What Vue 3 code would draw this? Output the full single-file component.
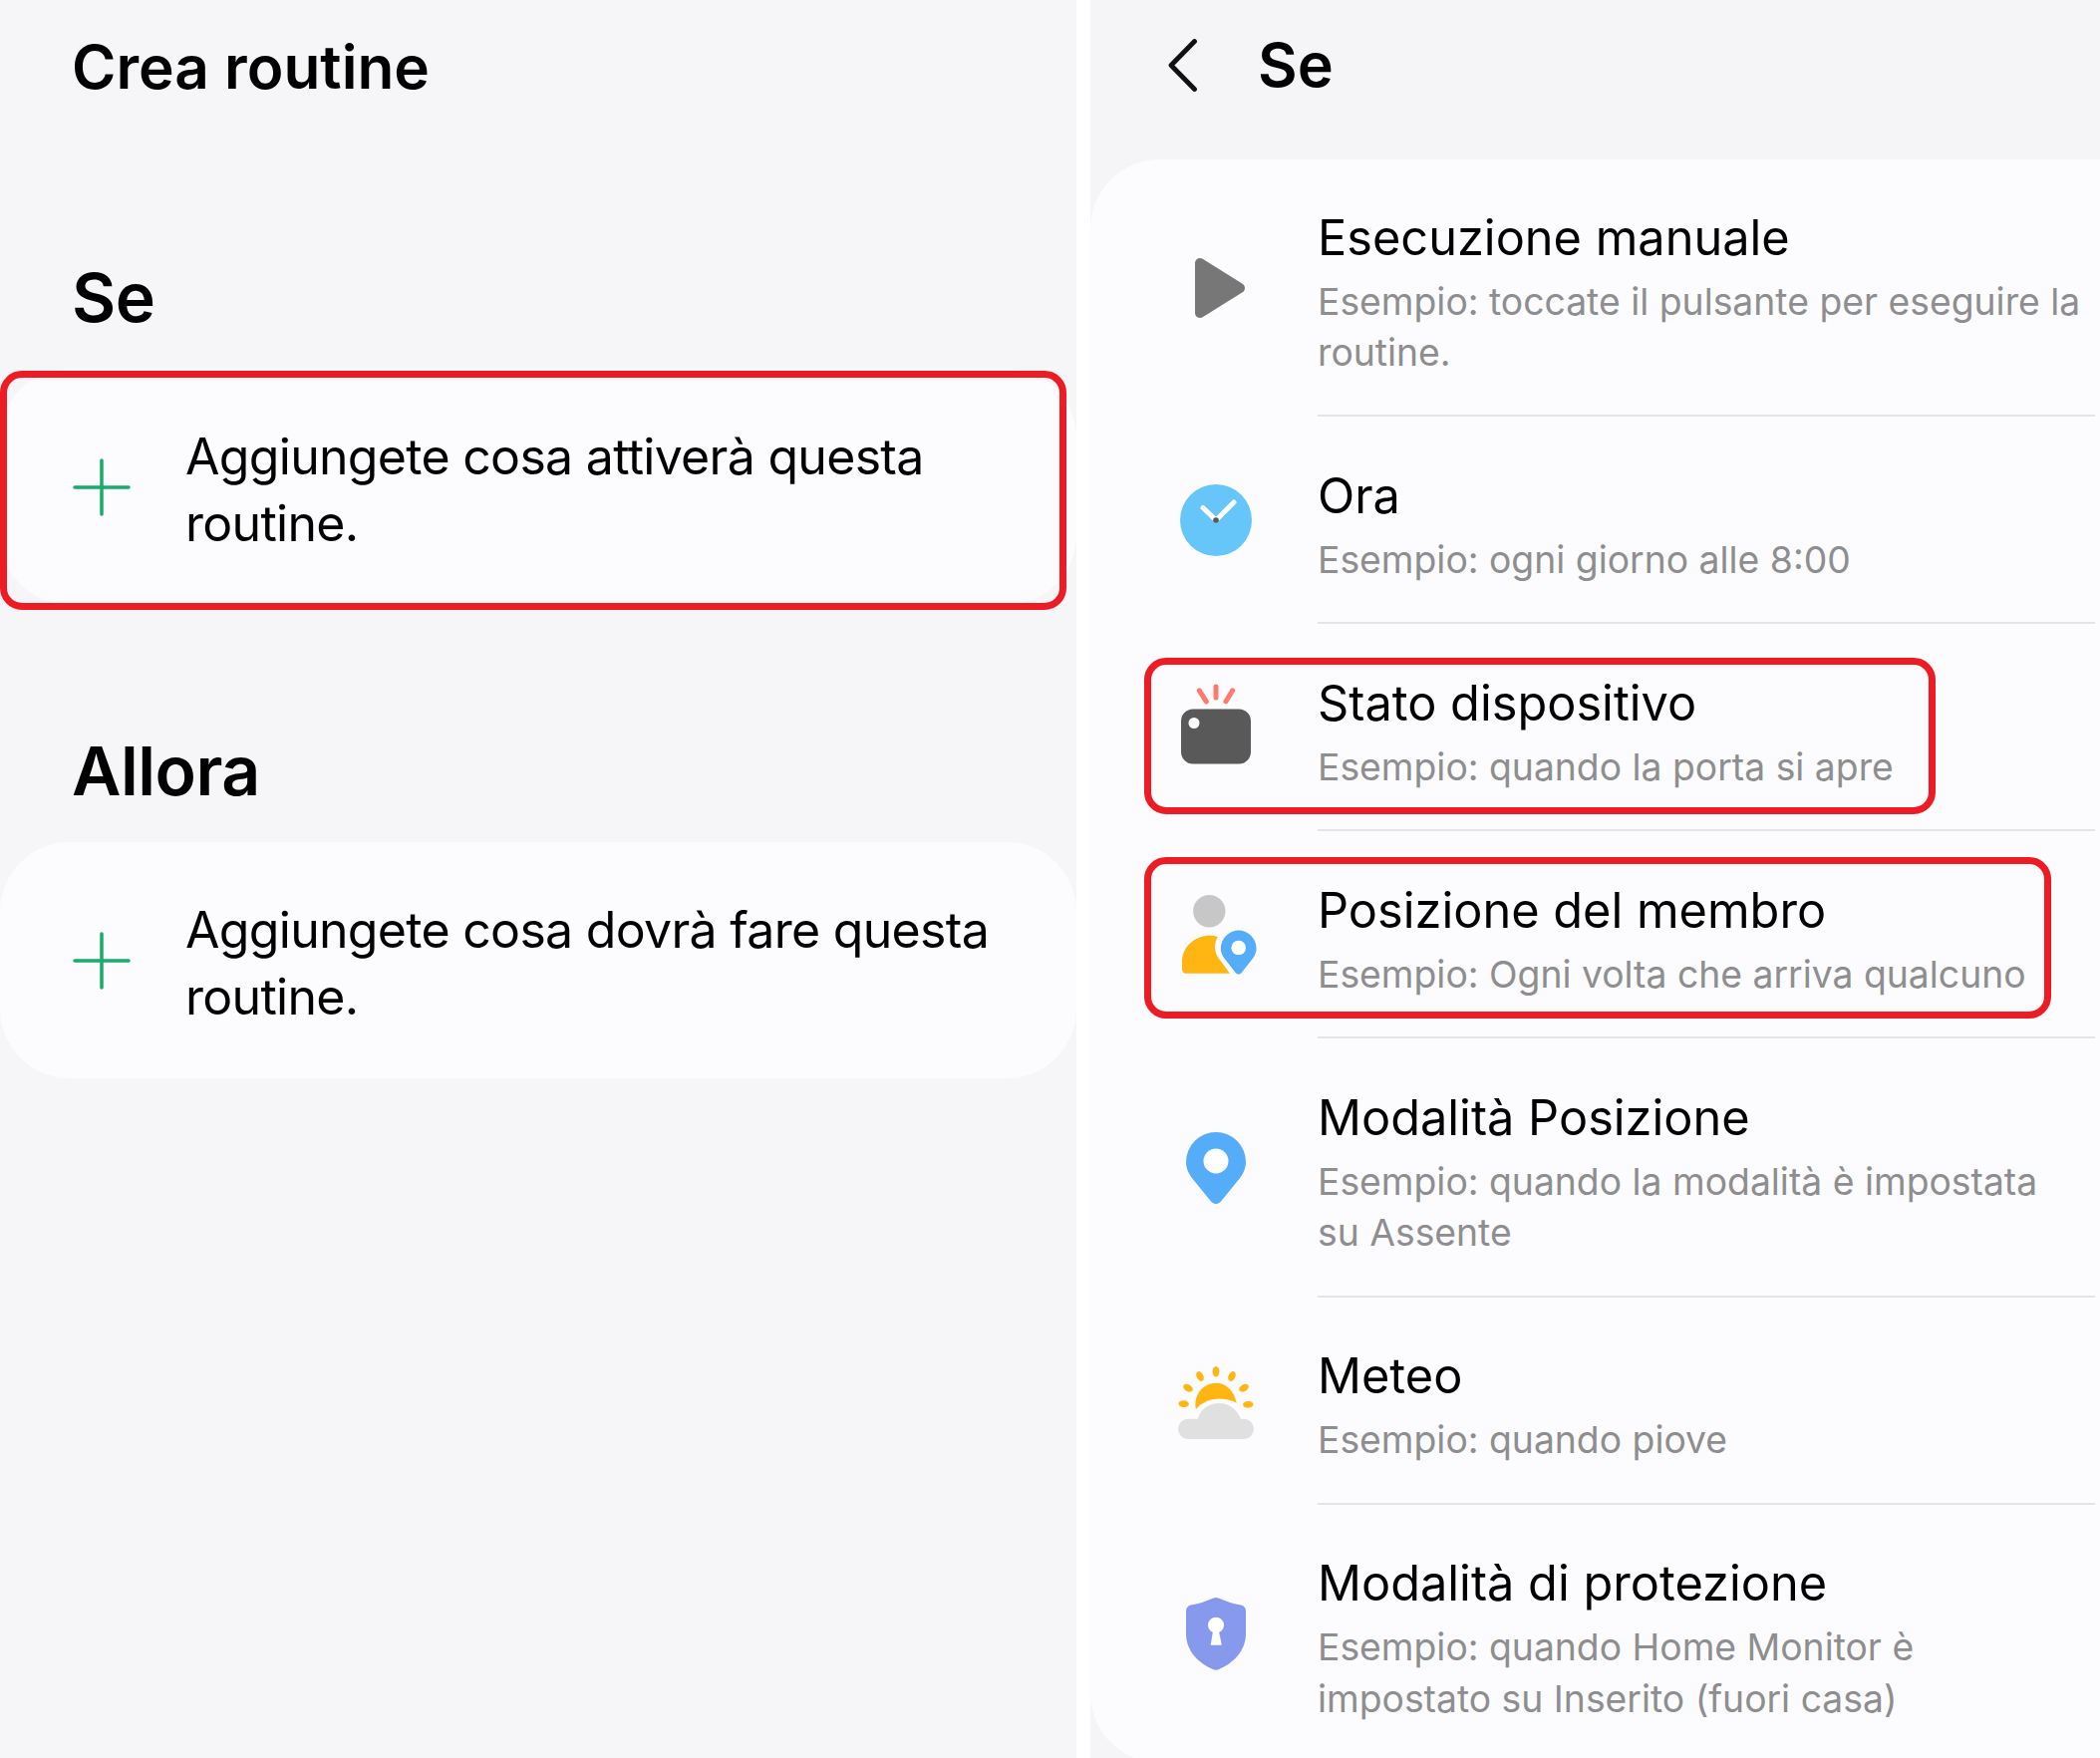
<script setup>
const rows = [
  { key: 'play', title: 'Esecuzione manuale', sub: 'Esempio: toccate il pulsante per eseguire la routine.' },
  { key: 'clock', title: 'Ora', sub: 'Esempio: ogni giorno alle 8:00' },
  { key: 'device', title: 'Stato dispositivo', sub: 'Esempio: quando la porta si apre', mark: 'mark-device' },
  { key: 'member', title: 'Posizione del membro', sub: 'Esempio: Ogni volta che arriva qualcuno', mark: 'mark-member' },
  { key: 'pin', title: 'Modalità Posizione', sub: 'Esempio: quando la modalità è impostata su\u00a0Assente' },
  { key: 'weather', title: 'Meteo', sub: 'Esempio: quando piove' },
  { key: 'shield', title: 'Modalità di protezione', sub: 'Esempio: quando Home Monitor è impostato su Inserito (fuori casa)' }
]
const pinPath = 'M40 87.5C38 87.5 36.5 86.6 35 85L15.5 61C12 56 10 51 10 45.5A30 30 0 0 1 70 45.5C70 51 68 56 64.5 61L45 85C43.5 86.6 42 87.5 40 87.5Z'
const rays = [
  [40, 20.3, 0], [24, 25, -28], [56, 25, 28], [12, 36.7, -60], [68, 36.7, 60], [7.7, 52.7, -87], [72.3, 53.3, 87]
]
</script>

<template>
  <div class="page">
    <section class="left">
      <h1 class="title">Crea routine</h1>
      <h2 class="heading first">Se</h2>
      <div class="add-card">
        <svg class="plus" width="54" height="54" viewBox="0 0 54 54"><path d="M27 0V54M0 27H54" stroke="#1aaa6b" stroke-width="3.5" stroke-linecap="round" /></svg>
        <p class="add-text">Aggiungete cosa attiverà questa routine.</p>
        <div class="mark mark-add"></div>
      </div>
      <h2 class="heading second">Allora</h2>
      <div class="add-card">
        <svg class="plus" width="54" height="54" viewBox="0 0 54 54"><path d="M27 0V54M0 27H54" stroke="#1aaa6b" stroke-width="3.5" stroke-linecap="round" /></svg>
        <p class="add-text">Aggiungete cosa dovrà fare questa routine.</p>
      </div>
    </section>

    <section class="right">
      <header class="bar">
        <svg class="back" width="29" height="53" viewBox="0 0 29 53"><path d="M26.5 2.5L3 26.5L26.5 50.5" fill="none" stroke="#111" stroke-width="4.8" stroke-linecap="round" stroke-linejoin="round" /></svg>
        <span class="bar-title">Se</span>
      </header>
      <div class="list">
        <div v-for="r in rows" :key="r.key" class="row">
          <svg class="icon" width="80" height="100" viewBox="0 0 80 100">
            <polygon v-if="r.key === 'play'" points="24,25 64,50 24,75" fill="#777" stroke="#777" stroke-width="10" stroke-linejoin="round" />
            <g v-if="r.key === 'clock'">
              <circle cx="40" cy="50" r="36" fill="#66c6fa" />
              <path d="M27 37.5L40 50L58 32" fill="none" stroke="#fff" stroke-width="5" stroke-linecap="round" stroke-linejoin="round" />
              <circle cx="40" cy="50" r="2.8" fill="#555" />
            </g>
            <g v-if="r.key === 'device'">
              <rect x="5" y="31.5" width="70" height="55" rx="12" fill="#595959" />
              <circle cx="18" cy="45.5" r="5.5" fill="#fff" />
              <path d="M40 9V20M23.3 12.8L30.3 23.8M56.7 12.8L50 23.8" stroke="#fd7b6e" stroke-width="5" stroke-linecap="round" />
            </g>
            <g v-if="r.key === 'member'">
              <circle cx="33.3" cy="26.3" r="16.2" fill="#c7c7c7" />
              <path d="M10 88.7Q6 88.7 6 84V77C6 61 20 50.7 34 50.7Q38 50.7 41.7 52C38 59 38 67 43 74L54 88.7Z" fill="#ffb612" />
              <path :d="pinPath" transform="translate(38.9 36.1) scale(0.595 0.61)" fill="#55acf8" />
              <circle cx="62.7" cy="63" r="7.3" fill="#fff" />
            </g>
            <g v-if="r.key === 'pin'">
              <path :d="pinPath" transform="translate(0 -1.5)" fill="#55acf8" />
              <circle cx="40" cy="43" r="12.5" fill="#fff" />
            </g>
            <g v-if="r.key === 'weather'">
              <ellipse v-for="(s, i) in rays" :key="i" :cx="s[0]" :cy="s[1]" rx="3.4" ry="5.2" :transform="`rotate(${s[2]} ${s[0]} ${s[1]})`" fill="#ffb612" />
              <path d="M20 58C17 43 28 31.7 40 31.7C50 31.7 58 39 60.7 51.5C55 49 49 47.5 43 47.5Q28 48 20 58Z" fill="#ffb612" />
              <path d="M11.2 88A10.2 10.2 0 0 1 11.2 67.7H22C24 58 33 52 43.3 52C53 52 61 58 65 67.7H68.8A10.2 10.2 0 0 1 68.8 88Z" fill="#e0e0e0" />
            </g>
            <g v-if="r.key === 'shield'">
              <path d="M40 14Q42 14 45 15.5C52 18.5 58 20.5 65 21.5Q70 22.5 70 28V50C70 68 57 80 43 86Q40 87.5 37 86C23 80 10 68 10 50V28Q10 22.5 15 21.5C22 20.5 28 18.5 35 15.5Q38 14 40 14Z" fill="#8799ec" />
              <circle cx="40" cy="41.7" r="8" fill="#fff" />
              <polygon points="37.3,46 34.7,61.7 45.7,61.7 42.7,46" fill="#fff" />
            </g>
          </svg>
          <div class="body">
            <div class="row-title">{{ r.title }}</div>
            <div class="row-sub">{{ r.sub }}</div>
          </div>
          <div v-if="r.mark" class="mark" :class="r.mark"></div>
        </div>
      </div>
    </section>
  </div>
</template>

<style>
html, body { margin: 0; background: #fff; }
</style>

<style scoped>
.page {
  width: 2107px;
  height: 1764px;
  overflow: hidden;
  display: flex;
  gap: 14px;
  background: #fff;
  font-family: Inter, "Noto Sans", sans-serif;
  color: #000;
}
.left {
  width: 1080px;
  flex: none;
  background: #f6f6f8;
  padding-top: 28px;
  box-sizing: border-box;
}
.title {
  margin: 0 0 0 72px;
  font-size: 60.3px;
  line-height: 80px;
  font-weight: 600;
}
.heading {
  margin: 0 0 27px 72px;
  font-size: 68px;
  line-height: 90px;
  font-weight: 600;
  letter-spacing: -0.5px;
}
.first { margin-top: 145px; }
.second { margin-top: 121px; }
.add-card {
  position: relative;
  display: flex;
  align-items: center;
  gap: 57px;
  padding: 55px 54px 48px 75px;
  background: #fcfcfe;
  border-radius: 70px;
}
.plus { flex: none; overflow: visible; margin-top: -7px; }
.add-text {
  margin: 0;
  font-size: 50px;
  line-height: 67px;
  letter-spacing: -0.7px;
}
.mark {
  position: absolute;
  box-sizing: border-box;
  border: 7px solid #ed1c24;
  border-radius: 22px;
  pointer-events: none;
}
.mark-add { left: 0; top: 2px; width: 1070px; height: 240px; }
.right {
  flex: 1;
  min-width: 0;
  background: #f5f5f7;
}
.bar {
  height: 160px;
  box-sizing: border-box;
  padding: 0 0 30px 78px;
  display: flex;
  align-items: center;
  gap: 61px;
}
.back { flex: none; }
.bar-title {
  font-size: 61px;
  line-height: 80px;
  font-weight: 600;
}
.list {
  background: #fcfcfe;
  border-radius: 70px 0 0 70px;
  padding-right: 5px;
}
.row {
  position: relative;
  display: flex;
  align-items: center;
  padding-left: 86px;
}
.icon { flex: none; overflow: visible; }
.body {
  flex: 1;
  min-width: 0;
  margin-left: 62px;
  padding: 49.5px 6px 37px 0;
  border-bottom: 2px solid #e4e4e6;
}
.row:first-child .body { padding-top: 48.5px; padding-bottom: 36.5px; }
.row:last-child .body { border-bottom-color: transparent; }
.row-title {
  font-size: 48.7px;
  line-height: 60px;
}
.row-sub {
  margin-top: 8px;
  font-size: 37.3px;
  line-height: 51.5px;
  color: #8e8e90;
}
.mark-device { left: 54px; top: 34px; width: 794px; height: 157px; }
.mark-member { left: 54px; top: 26px; width: 910px; height: 162px; }
</style>
